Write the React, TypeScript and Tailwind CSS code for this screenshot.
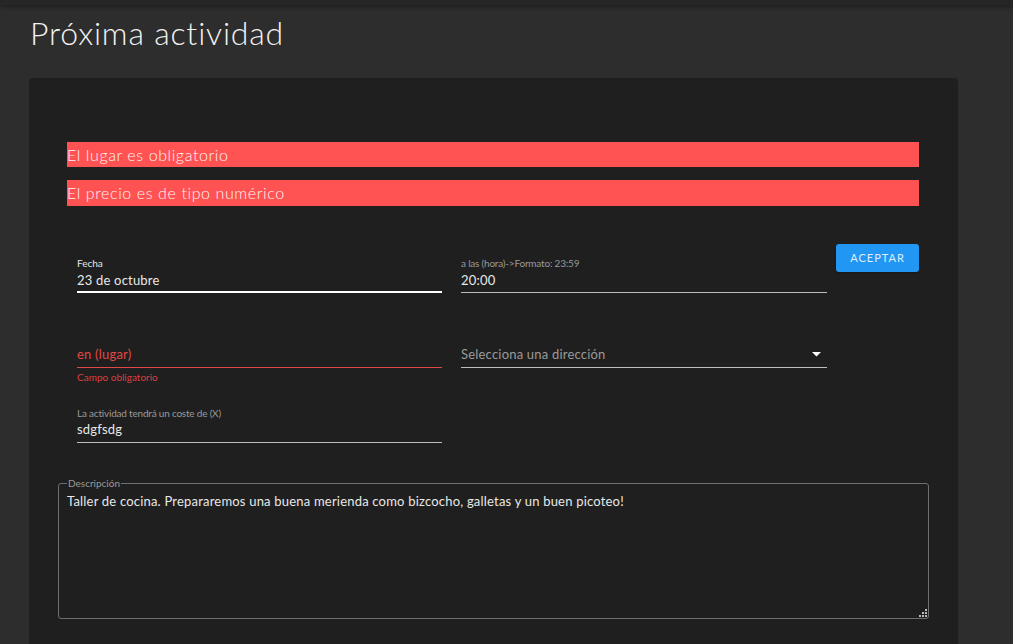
import React from "react";

const font = { fontFamily: "Lato, 'Open Sans', sans-serif" };

export default function App() {
  return (
    <div className="min-h-[644px] h-[644px] overflow-hidden bg-[#2d2d2d] text-white" style={font}>
      <div className="h-[5px] bg-[#262626] shadow-[0_2px_4px_rgba(0,0,0,0.35)]" />
      <div className="pl-[30px] pt-[8px] h-[73px]">
        <h1 className="text-[32px] font-light leading-[40px] text-[#f2f2f2] tracking-[0.8px]">Próxima actividad</h1>
      </div>
      <div className="ml-[29px] w-[929px] h-[600px] bg-[#1f1f1f] rounded-t-[4px] pt-[64px]">
        <div className="ml-[38px] w-[852px] flex flex-col gap-[13px]">
          <div className="h-[25px] bg-[#ff5252] text-[16px] font-light leading-[25px] text-[#fff4f4] tracking-[0.6px]">El lugar es obligatorio</div>
          <div className="h-[26px] bg-[#ff5252] text-[16px] font-light leading-[26px] text-[#fff4f4] tracking-[0.6px]">El precio es de tipo numérico</div>
        </div>

        <div className="flex mt-[38px] pl-[48px]">
          <div className="w-[365px] pt-[12px]">
            <div className="text-[10px] leading-[14px] text-[#e6e6e6]">Fecha</div>
            <div className="text-[13px] leading-[18px] text-[#e8e8e8] mt-[1px] tracking-[0.2px]">23 de octubre</div>
            <div className="h-[2px] bg-white mt-[2px]" />
          </div>
          <div className="w-[366px] ml-[19px] pt-[12px]">
            <div className="text-[10px] leading-[14px] text-[#9a9a9a] tracking-[-0.2px]">a las (hora)-&gt;Formato: 23:59</div>
            <div className="text-[13px] leading-[18px] text-[#e8e8e8] mt-[1px] tracking-[0.2px]">20:00</div>
            <div className="h-px bg-[#bdbdbd] mt-[3px]" />
          </div>
          <div className="ml-[9px]">
            <button className="w-[83px] h-[28px] bg-[#2196f3] rounded-[3px] text-[11px] tracking-[1px] text-[#dfeeff] shadow-[0_1px_2px_rgba(0,0,0,0.3)]">ACEPTAR</button>
          </div>
        </div>

        <div className="flex mt-[52px] pl-[48px]">
          <div className="w-[365px]">
            <div className="text-[13px] leading-[18px] text-[#e04848] tracking-[0.2px]">en (lugar)</div>
            <div className="h-px bg-[#e04848] mt-[4px]" />
            <div className="text-[10px] leading-[14px] text-[#d94040] mt-[2px]">Campo obligatorio</div>
          </div>
          <div className="w-[366px] ml-[19px]">
            <div className="flex items-center justify-between">
              <div className="text-[13px] leading-[18px] text-[#9a9a9a] tracking-[0.2px]">Selecciona una dirección</div>
              <svg width="9" height="5" viewBox="0 0 9 5" className="mr-[6px]"><path d="M0 0h9L4.5 4.5z" fill="#ffffff" /></svg>
            </div>
            <div className="h-px bg-[#bdbdbd] mt-[4px]" />
          </div>
        </div>

        <div className="pl-[48px] mt-[22px]">
          <div className="w-[365px]">
            <div className="text-[10px] leading-[14px] text-[#9a9a9a] tracking-[-0.2px]">La actividad tendrá un coste de (X)</div>
            <div className="text-[13px] leading-[18px] text-[#e8e8e8] mt-0 tracking-[0.2px]">sdgfsdg</div>
            <div className="h-px bg-[#bdbdbd] mt-[4px]" />
          </div>
        </div>

        <fieldset className="relative mx-[29px] mt-[34px] h-[142px] border border-[#6e6e6e] rounded-[3px] px-[8px] pt-0">
          <legend className="text-[10px] leading-[12px] text-[#9a9a9a] px-[1px] ml-0">Descripción</legend>
          <div className="text-[13px] leading-[18px] text-[#e8e8e8] mt-[3px] tracking-[0.2px]">Taller de cocina. Prepararemos una buena merienda como bizcocho, galletas y un buen picoteo!</div>
          <svg width="8" height="8" viewBox="0 0 8 8" className="absolute right-[1px] bottom-[1px]">
            <rect x="6" y="0" width="2" height="2" fill="#bbb" />
            <rect x="3" y="3" width="2" height="2" fill="#bbb" />
            <rect x="6" y="3" width="2" height="2" fill="#bbb" />
            <rect x="0" y="6" width="2" height="2" fill="#bbb" />
            <rect x="3" y="6" width="2" height="2" fill="#bbb" />
            <rect x="6" y="6" width="2" height="2" fill="#bbb" />
          </svg>
        </fieldset>
      </div>
    </div>
  );
}
